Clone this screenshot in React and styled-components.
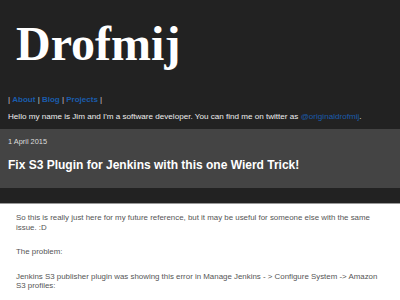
import styled, { createGlobalStyle } from "styled-components";

const Global = createGlobalStyle`
  body {
    margin: 0;
    background: #fff;
    font-family: "Liberation Sans", Arial, sans-serif;
  }
`;

const Header = styled.header`
  background: #222;
  padding: 0 8px;
  height: 129px;
  overflow: hidden;
`;

const Brand = styled.h1`
  margin: 0;
  padding: 20px 0 0 8px;
  font-family: "Liberation Serif", "Times New Roman", serif;
  font-size: 48px;
  line-height: 48px;
  font-weight: bold;
  color: #fff;
`;

const Nav = styled.nav`
  margin-top: 27px;
  font-size: 8px;
  line-height: 10px;
  color: #ccc;
`;

const NavLink = styled.a`
  color: #1a5cad;
  font-weight: bold;
  text-decoration: none;
`;

const Intro = styled.p`
  margin: 7px 0 0;
  font-size: 8.1px;
  line-height: 10px;
  color: #eee;
`;

const TwitterLink = styled.a`
  color: #1a5cad;
  text-decoration: none;
`;

const PostHead = styled.section`
  background: #444;
  height: 59px;
  padding: 8px 8px 0;
  box-sizing: border-box;
`;

const PostDate = styled.div`
  font-size: 7.4px;
  line-height: 10px;
  color: #ddd;
`;

const PostTitle = styled.h2`
  margin: 11px 0 0;
  font-size: 12px;
  line-height: 14px;
  font-weight: bold;
  color: #fff;
`;

const Divider = styled.div`
  height: 15px;
  background: #222;
  border-bottom: 1px solid #999;
`;

const Body = styled.article`
  padding: 9px 16px 8px;
  color: #555;
  font-size: 7.9px;
  line-height: 9.6px;
`;

const Para = styled.p`
  margin: 0 0 15px;
`;

export default function App() {
  return (
    <>
      <Global />
      <Header>
        <Brand>Drofmij</Brand>
        <Nav>
          | <NavLink href="#">About</NavLink> | <NavLink href="#">Blog</NavLink> |{" "}
          <NavLink href="#">Projects</NavLink> |
        </Nav>
        <Intro>
          Hello my name is Jim and I'm a software developer. You can find me on twitter as{" "}
          <TwitterLink href="#">@originaldrofmij</TwitterLink>.
        </Intro>
      </Header>
      <PostHead>
        <PostDate>1 April 2015</PostDate>
        <PostTitle>Fix S3 Plugin for Jenkins with this one Wierd Trick!</PostTitle>
      </PostHead>
      <Divider />
      <Body>
        <Para>
          So this is really just here for my future reference, but it may be useful for someone else
          with the same issue. :D
        </Para>
        <Para>The problem:</Para>
        <Para>
          Jenkins S3 publisher plugin was showing this error in Manage Jenkins - &gt; Configure System
          -&gt; Amazon S3 profiles:
        </Para>
      </Body>
    </>
  );
}
